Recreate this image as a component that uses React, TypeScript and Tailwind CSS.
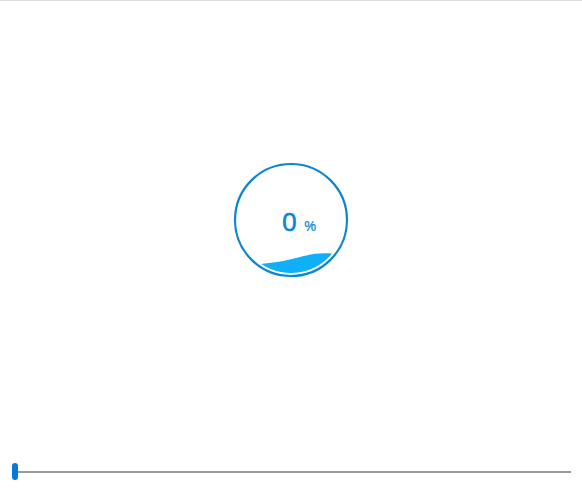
import React from "react";

export default function App() {
  return (
    <div className="w-[582px] h-[500px] bg-white border-t border-[#dcdcdc] flex flex-col" style={{ fontFamily: '"Open Sans", "Liberation Sans", sans-serif' }}>
      <div className="flex justify-center pt-[160px]">
        <svg width="118" height="118" viewBox="0 0 118 118">
          <defs>
            <clipPath id="inner">
              <circle cx="59" cy="59" r="53" />
            </clipPath>
          </defs>
          <circle cx="59" cy="59" r="56" fill="none" stroke="#0a86d2" strokeWidth="2.2" />
          <path
            clipPath="url(#inner)"
            d="M0 104 C 30 104, 50 101, 68 96 S 95 92, 118 94 L118 118 L0 118 Z"
            fill="#0fb0f7"
          />
          <text x="50" y="69.5" fontSize="26" fontWeight="400" fill="#0a86d2" stroke="#0a86d2" strokeWidth="0.7" fontFamily='"Open Sans", "Liberation Sans", sans-serif'>0</text>
          <text x="72" y="70" fontSize="15" fontWeight="400" fill="#0a86d2" stroke="#0a86d2" strokeWidth="0.2" fontFamily='"Open Sans", "Liberation Sans", sans-serif'>%</text>
        </svg>
      </div>
      <div className="mt-auto mb-[20px] pl-[12px] pr-[11px] flex items-center">
        <div className="w-[6px] h-[17px] rounded-[3px] bg-[#0a78d2] shrink-0" />
        <div className="flex-1 h-[2px] bg-[#9a9a9a]" />
      </div>
    </div>
  );
}
